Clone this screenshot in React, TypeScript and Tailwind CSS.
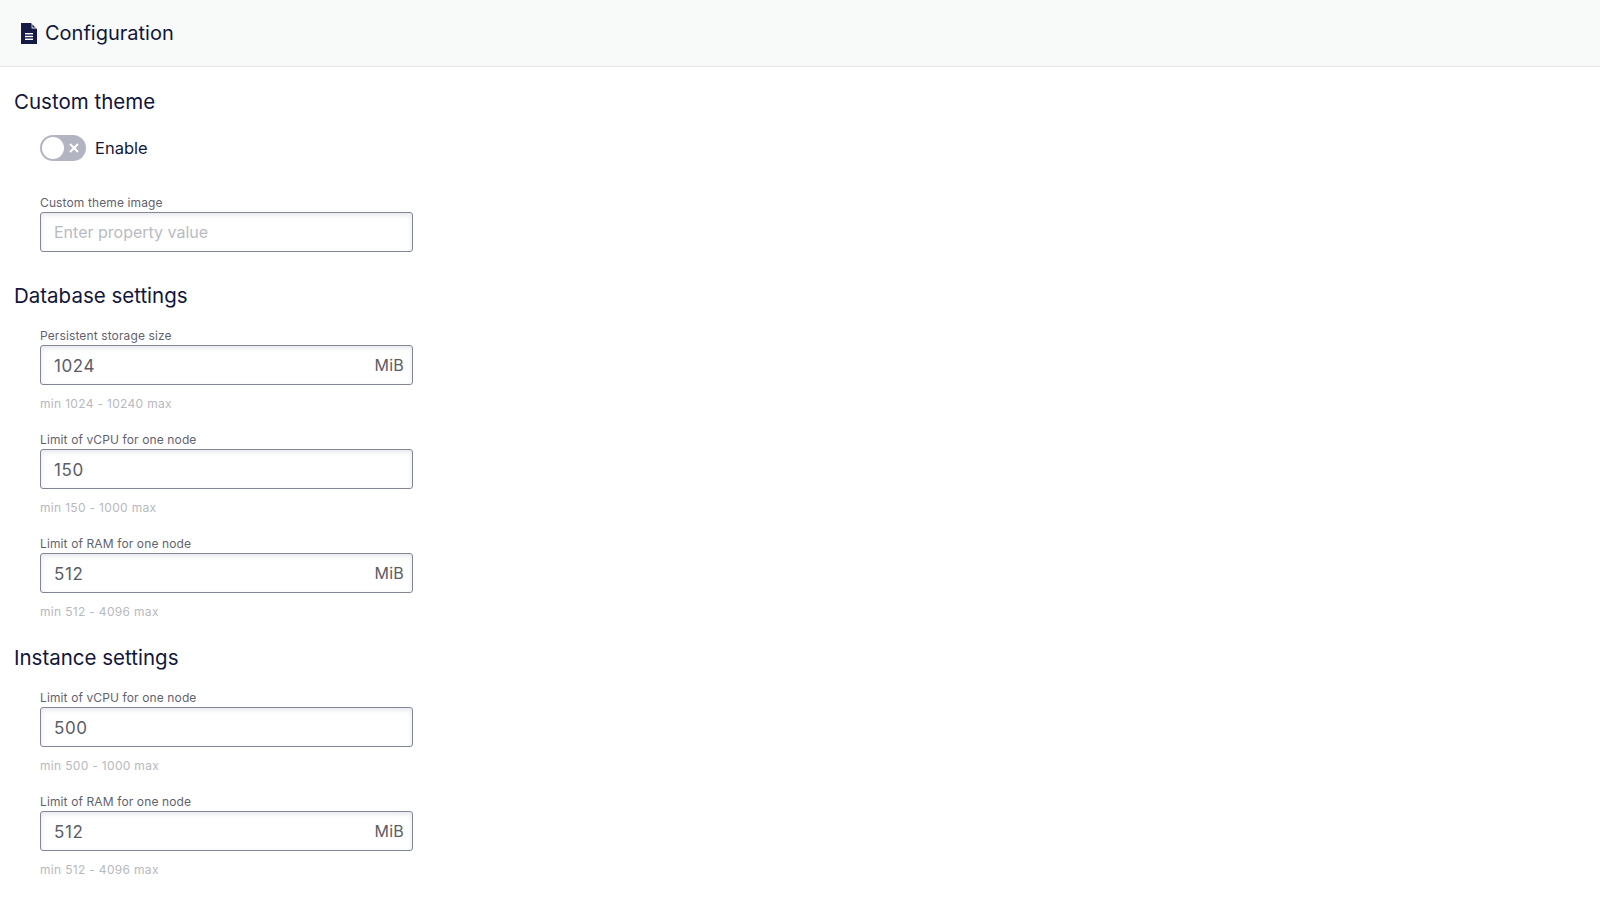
import React from 'react'

interface FieldProps {
  label: string
  value?: string
  placeholder?: string
  unit?: string
  hint?: string
}

function Field({ label, value, placeholder, unit, hint }: FieldProps) {
  return (
    <div className="w-[373px] ml-[40px] h-[104px]">
      <div className="h-[16px] text-[12px] leading-[16px] tracking-[0.12px] text-[#5f6270]">{label}</div>
      <div className="h-[40px] mt-[1px] flex items-center justify-between pl-[13px] pr-[8px] rounded-[3px] border border-[#83869a] bg-white shadow-[inset_0_2px_5px_rgba(120,125,150,0.2)]">
        {value ? (
          <span className="text-[17px] leading-[24px] pt-[1px] tracking-[0.6px] text-[#5a5d68]">{value}</span>
        ) : (
          <span className="text-[16px] leading-[24px] text-[#b9bbc3]">{placeholder}</span>
        )}
        {unit && <span className="text-[16px] leading-[24px] tracking-[0.2px] text-[#5a5d68]">{unit}</span>}
      </div>
      {hint && <div className="mt-[11px] text-[12px] leading-[16px] tracking-[0.32px] text-[#b7b9c1]">{hint}</div>}
    </div>
  )
}

function SectionTitle({ children }: { children: React.ReactNode }) {
  return <h2 className="pl-[14px] text-[20.5px] leading-[28px] text-[#12163a]">{children}</h2>
}

function FileIcon() {
  return (
    <svg width="16" height="21" viewBox="0 0 16 21" className="shrink-0">
      <path d="M0 0H10L16 6V21H0Z" fill="#141a45" />
      <path d="M10.6 0.2L15.8 5.4H10.6Z" fill="#f7f8f9" />
      <path d="M11.4 1.6L14.4 4.6H11.4Z" fill="#141a45" />
      <rect x="4" y="10" width="8" height="1.4" fill="#ffffff" />
      <rect x="4" y="12.8" width="8" height="1.4" fill="#ffffff" />
      <rect x="4" y="15.6" width="8" height="1.4" fill="#ffffff" />
    </svg>
  )
}

export default function App() {
  return (
    <div className="w-[1600px] h-[905px] overflow-hidden bg-white font-['Inter','Noto_Sans',sans-serif]">
      <header className="h-[67px] flex items-center gap-[8px] pl-[21px] bg-[#f8f9f9] border-b border-[#e6e7ea]">
        <FileIcon />
        <h1 className="text-[20px] leading-[28px] mb-[1px] text-[#12163a]">Configuration</h1>
      </header>

      <div className="pt-[21px]">
        <SectionTitle>Custom theme</SectionTitle>

        <div className="ml-[40px] mt-[19px] flex items-center gap-[9px] h-[26px]">
          <div className="w-[46px] h-[26px] rounded-full bg-[#b2b4c2] flex items-center justify-between pl-[2px] pr-[7px]">
            <div className="w-[22px] h-[22px] rounded-full bg-white" />
            <svg width="10" height="10" viewBox="0 0 10 10">
              <path d="M1 1L9 9M9 1L1 9" stroke="#ffffff" strokeWidth="2" />
            </svg>
          </div>
          <span className="text-[16.5px] text-[#12163a]">Enable</span>
        </div>

        <div className="mt-[34px] h-[65px]">
          <Field label="Custom theme image" placeholder="Enter property value" />
        </div>

        <div className="mt-[22px]">
          <SectionTitle>Database settings</SectionTitle>
        </div>
        <div className="mt-[18px]">
          <Field label="Persistent storage size" value="1024" unit="MiB" hint="min 1024 - 10240 max" />
          <Field label="Limit of vCPU for one node" value="150" hint="min 150 - 1000 max" />
          <div className="h-[90px]">
            <Field label="Limit of RAM for one node" value="512" unit="MiB" hint="min 512 - 4096 max" />
          </div>
        </div>

        <div className="mt-[18px]">
          <SectionTitle>Instance settings</SectionTitle>
        </div>
        <div className="mt-[18px]">
          <Field label="Limit of vCPU for one node" value="500" hint="min 500 - 1000 max" />
          <Field label="Limit of RAM for one node" value="512" unit="MiB" hint="min 512 - 4096 max" />
        </div>
      </div>
    </div>
  )
}
